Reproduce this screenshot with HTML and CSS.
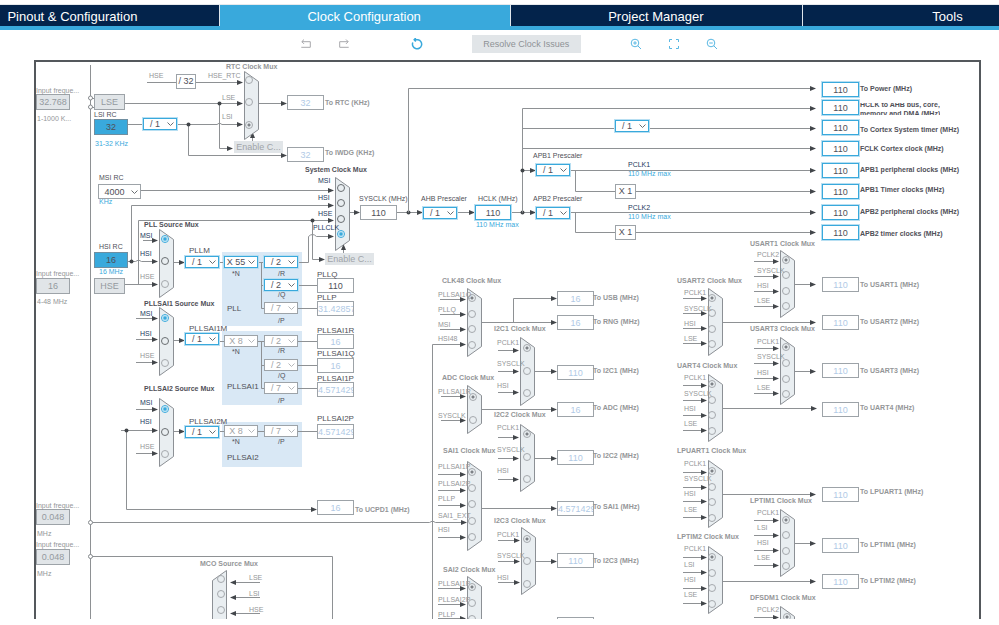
FILE: index.html
```html
<!DOCTYPE html>
<html lang="en">
<head>
<meta charset="utf-8">
<title>Clock Configuration</title>
<link rel="stylesheet" href="styles.css">
</head>
<body>
<nav class="tabs">
  <a class="tab" href="#pinout">Pinout &amp; Configuration</a>
  <a class="tab tab-active" href="#clock" aria-current="page">Clock Configuration</a>
  <a class="tab" href="#project">Project Manager</a>
  <a class="tab" href="#tools">Tools</a>
</nav>
<div class="toolbar">
  <div class="group">
    <button class="tool muted" aria-label="Undo"><svg viewBox="0 0 12 12"><path d="M4 1.5 1.8 3.7 4 5.9M2 3.7h8.3v5.6H1.3"/></svg></button>
    <button class="tool muted" aria-label="Redo"><svg viewBox="0 0 12 12"><path d="M8 1.5l2.200 2.200L8 5.900M10 3.700H1.700v5.600h9"/></svg></button>
  </div>
  <button class="tool strong" aria-label="Reset"><svg viewBox="0 0 12 12"><path d="M1.800 4.500A4.600 4.600 0 1 0 7 1.700H3.200M4.800 0 3.200 1.700 4.800 3.400"/></svg></button>
  <button class="resolve">Resolve Clock Issues</button>
  <div class="group">
    <button class="tool" aria-label="Zoom in"><svg viewBox="0 0 12 12"><circle cx="5" cy="5" r="3.800"/><path d="M7.800 7.800 11 11M3.200 5h3.600M5 3.200v3.600"/></svg></button>
    <button class="tool" aria-label="Fit to window"><svg viewBox="0 0 12 12"><path d="M1.500 4V1.500H4M8 1.500h2.500V4M10.500 8v2.500H8M4 10.500H1.500V8"/></svg></button>
    <button class="tool" aria-label="Zoom out"><svg viewBox="0 0 12 12"><circle cx="5" cy="5" r="3.800"/><path d="M7.800 7.800 11 11M3.200 5h3.600"/></svg></button>
  </div>
</div>
<main class="board" id="board">
  <svg class="wires"><g id="wires"></g></svg>
</main>
<script src="clock.js"></script>
</body>
</html>
```
FILE: styles.css
```css
* {
  box-sizing: border-box;
}

body {
  margin: 0;
  height: 100vh;
  display: flex;
  flex-direction: column;
  overflow: hidden;
  background: #fff;
  font-family: "Liberation Sans", Arial, sans-serif;
  color: #505058;
}

button,
input,
select {
  margin: 0;
  padding: 0;
  font: inherit;
  color: inherit;
  appearance: none;
  border-radius: 0;
}

.tabs {
  display: flex;
  margin-top: 4px;
  border-top: 1px solid #e6e9ec;
  border-bottom: 4px solid #39a9dc;
  overflow: hidden;
}

.tab {
  flex: 0 0 29.2%;
  height: 21px;
  line-height: 23px;
  padding-right: 2px;
  border-right: 1px solid #dfe6ec;
  background: #03234b;
  color: #fff;
  font-size: 13px;
  text-align: center;
  text-decoration: none;
}

.tab:first-child {
  margin-left: -7.2%;
}

.tab-active {
  background: #39a9dc;
}

.toolbar {
  display: flex;
  align-items: center;
  gap: 45px;
  height: 30px;
  padding-left: 29.6%;
  padding-bottom: 2px;
}

.group {
  display: flex;
  gap: 18px;
}

.group:first-child {
  margin-right: 8px;
}

.tool {
  width: 20px;
  height: 20px;
  border: 0;
  background: none;
  color: #5ab8e3;
  display: grid;
  place-items: center;
}

.tool svg {
  width: 12px;
  height: 12px;
  fill: none;
  stroke: currentColor;
  stroke-width: 1;
}

.tool.muted {
  color: #a8a8ac;
}

.tool.strong {
  color: #39a9dc;
}

.tool.strong svg {
  stroke-width: 1.5;
}

.resolve {
  width: 109px;
  height: 18px;
  border: 0;
  background: #e1e5e8;
  color: #8e9296;
  font-size: 9px;
}

.board {
  flex: 1;
  position: relative;
  margin: 0 18px 6px 34px;
  border: 2px solid #54585c;
  border-bottom: 0;
  overflow: hidden;
}

.wires {
  position: absolute;
  left: 0;
  top: 0;
  width: 100%;
  height: 100%;
}

.wire {
  fill: none;
  stroke: #8e9194;
  stroke-width: 1;
}

.head,
.dot {
  fill: #42464a;
}

.pad {
  fill: #fff;
  stroke: #85898d;
}

.mux {
  fill: #e9eef1;
  stroke: #8c9095;
}

.zone {
  fill: #d9e8f5;
}

/* Items placed on the diagram */
.item {
  position: absolute;
}

.text {
  font-size: 7px;
  line-height: 10px;
  white-space: nowrap;
}

.wide {
  font-size: 8px;
}

.wrap {
  height: 12px;
  display: flex;
  align-items: center;
  line-height: 9px;
  white-space: pre;
  overflow: hidden;
}

.bold {
  font-weight: bold;
}

.gray {
  color: #949698;
}

.navy {
  color: #243a5e;
}

.blue {
  color: #39a9dc;
}

.box {
  border: 1px solid #9da3a8;
  background: #fff;
  font-size: 9px;
  line-height: 12px;
  text-align: center;
}

.box.on {
  border-color: #39a9dc;
  box-shadow: 0 0 0 1px #b8dff2;
}

.box.off {
  color: #b1cae6;
}

.box.src {
  background: #39a9dc;
  border-color: #6f8ea0;
}

.box.pin {
  background: #e1e5e8;
  color: #949a9f;
}

.box.enable {
  background: #e1e5e8;
  border-color: #e1e5e8;
  color: #a0a4a8;
  line-height: 10px;
}

.pick select {
  display: block;
  width: 100%;
  height: 100%;
  border: 1px solid #39a9dc;
  box-shadow: 0 0 0 1px #b8dff2;
  background: #fff;
  font-size: 9px;
  line-height: 10px;
  padding-right: 10px;
  text-align: center;
  text-align-last: center;
}

.pick svg {
  position: absolute;
  right: 3px;
  top: 50%;
  width: 7px;
  height: 4px;
  margin-top: -2px;
  fill: none;
  stroke: #6a6e72;
}

.pick.idle select,
.pick.plain select {
  border-color: #9da3a8;
  box-shadow: none;
}

.pick.idle {
  color: #a0a3a6;
}

.pick.idle svg {
  stroke: #b4b7ba;
}

.radio {
  width: 8px;
  height: 8px;
  border: 1px solid #a5a9ad;
  border-radius: 50%;
}

.radio.live {
  border-color: #6a6e72;
}

.radio:checked {
  background: radial-gradient(circle, #7d8186 0 1px, transparent 2px);
}

.radio.live:checked {
  border-color: #39a9dc;
  background: radial-gradient(circle, #39a9dc 0 1px, #fff 3px);
}
```
FILE: clock.js
```js
// Board coordinates are measured from this origin.
const OX = 36, OY = 62;
const board = document.getElementById('board');
const wires = document.getElementById('wires');
wires.setAttribute('transform', `translate(${-OX} ${-OY})`);
let serial = 0;

function svg(name, cls, attrs) {
  const e = document.createElementNS('http://www.w3.org/2000/svg', name);
  e.setAttribute('class', cls);
  for (const k in attrs) e.setAttribute(k, attrs[k]);
  wires.append(e);
}

function item(tag, cls, x, y, w, h) {
  const e = document.createElement(tag);
  e.className = 'item ' + cls;
  e.style.left = x - OX + 'px';
  e.style.top = y - OY + 'px';
  if (w) e.style.width = w + 'px';
  if (h) e.style.height = h + 'px';
  board.append(e);
  return e;
}

// y is the vertical centre of the line of text
function text(str, x, y, cls = '', target) {
  const e = item(target ? 'label' : 'span', 'text ' + cls, x, Math.round(y - 5));
  e.textContent = str;
  if (target) e.htmlFor = target;
}

function box(str, x, y, w, h, cls) {
  const e = item('input', 'box ' + cls, x, y, w, h);
  e.type = 'text';
  e.readOnly = true;
  e.value = str;
  e.id = 'f' + ++serial;
  return e;
}

function field(str, x, y, w, h, cls, label, lx, ly, lcls) {
  text(label, lx, ly, lcls, box(str, x, y, w, h, cls).id);
}

function pick(str, x, y, name, cls = '', w = 34, h = 12) {
  const e = item('span', 'pick ' + cls, x, y, w, h);
  e.innerHTML = `<select aria-label="${name}"><option>${str}</option></select>` +
    '<svg viewBox="0 0 7 4"><path d="M.5.5 3.500 3.500 6.500.5"/></svg>';
}

function wire(d) {
  svg('path', 'wire', { d });
}

function head(x, y, dir = 'r') {
  const d = {
    r: `M${x} ${y}l-6-2.500v5z`,
    l: `M${x} ${y}l6-2.500v5z`,
    u: `M${x} ${y}l-2.500 6h5z`
  }[dir];
  svg('path', 'head', { d });
}

function arrow(d, x, y) {
  wire(`${d}H${x - 3}`);
  head(x, y);
}

function dot(x, y) {
  svg('circle', 'dot', { cx: x, cy: y, r: 2 });
}

// Blue PLL zones
[[252, 74], [331, 74], [422, 45]].forEach(([y, h]) =>
  svg('rect', 'zone', { x: 222, y, width: 80, height: h }));

// Supply line and pads
wire('M90.500 65V619M90.500 98.500H94M90.500 107.500H94');
wire('M92 522.500H429.500q3-3 6 0H464');
head(467, 522.5);
wire('M92 556.500H332.500V619');
[98, 107, 522.5, 556.5].forEach(y => svg('circle', 'pad', { cx: 90.5, cy: y, r: 2 }));

// RTC
wire('M147 82.500H176');
arrow('M196 82.500', 243, 82.5);
arrow('M125 103.500', 243, 103.5);
wire('M128 124.500H143');
wire('M177 124.500H217q2.500-3 5 0H240');
head(243, 124.5);
arrow('M219.500 103.500V148.500', 233, 148.5);
arrow('M188.500 124.500V155.500', 287, 155.5);
arrow('M258 103.500', 287, 103.5);
dot(219.5, 103.5);
dot(188.5, 124.5);
wire('M252.500 142V136');
head(252.5, 132, 'u');

// System clock
arrow('M141 190.500', 334, 190.5);
arrow('M131.500 261.500V205.500', 334, 205.5);
wire('M128 261.500H135.500q3-3 6 0H155');
head(158, 261.5);
dot(131.5, 261.5);
arrow('M125 284.500', 158, 284.5);
arrow('M138.500 284.500V220.500', 334, 220.5);
wire('M298 262.500H308.500V236.500q4-4 8 0H331');
head(334, 236.5);
arrow('M312.500 220.500V259.500', 325, 259.5);
dot(312.5, 220.5);
wire('M343.500 254V247');
head(343.5, 244, 'u');
arrow('M349 212.500', 360, 212.5);
arrow('M397 212.500', 423, 212.5);
arrow('M457 212.500', 475, 212.5);
arrow('M511 212.500', 536, 212.5);
dot(408.5, 212.5);
dot(522.5, 212.5);
arrow('M408.500 212.500V88.500', 816, 88.5);
arrow('M522.500 212.500V108.500', 816, 108.5);
[128.5, 148.5].forEach(y => arrow(`M522.500 ${y}`, 816, y));
arrow('M522.500 170.500', 536, 170.5);
dot(522.5, 170.5);
[[170.5, 191.5], [212.5, 232.5]].forEach(([a, b]) => {
  arrow(`M570 ${a}`, 816, a);
  arrow(`M575.500 ${a}V${b}`, 816, b);
});

// PLLs
wire('M219 262.500H264M261.500 262.500V308.500M261.500 285.500H317M261.500 308.500H317');
wire('M219 341.500H317M261.500 341.500V388.500M261.500 365.500H317M261.500 388.500H317M219 431.500H317');
arrow('M126.500 430.500V509.500', 317, 509.5);
wire('M121 430.500H137');
dot(126.5, 430.5);

arrow('M513.500 322.500V298.500', 557, 298.5);
wire('M432.500 619V344.500H440');

// Muxes: title, title colour, title x/y, body x/y/height, radio x, label x, input line x,
// inputs [name, radio y, line y, label y], output [y, tip x], selected input
const muxes = [
  ['RTC Clock Mux', 'gray', 226, 67, 244, 71, 68, 249, 222, 0, [['HSE_RTC', 80, 0, 76, 208], ['LSE', 102, 0, 98], ['LSI', 125, 0, 117]], 0, 2],
  ['System Clock Mux', '', 305, 170, 335, 177, 73, 341, 318, 0, [['MSI', 188, 0, 181], ['HSI', 203, 0, 198], ['HSE', 219, 0, 214], ['PLLCLK', 234, 0, 228, 313]], 0, 3],
  ['PLL Source Mux', '', 144, 225, 159, 229, 68, 165, 140, 143, [['MSI', 239, 240, 236], ['HSI', 261, 0, 254], ['HSE', 284, 0, 277]], [262, 185], 0],
  ['PLLSAI1 Source Mux', '', 144, 304, 159, 307, 68, 165, 140, 136, [['MSI', 318, 318, 314], ['HSI', 341, 339, 334], ['HSE', 363, 362, 356]], [340, 185], 0],
  ['PLLSAI2 Source Mux', '', 144, 389, 159, 398, 68, 165, 140, 136, [['MSI', 409, 409, 403], ['HSI', 432, 430, 422], ['HSE', 454, 453, 447]], [431, 185], 0],
  ['CLK48 Clock Mux', 'gray', 442, 281, 467, 288, 68, 472, 438, 440, [['PLLSAI1Q', 298, 299, 295], ['PLLQ', 314, 314, 310], ['MSI', 329, 329, 325], ['HSI48', 345, 344, 339]], [322, 557], 0],
  ['I2C1 Clock Mux', 'gray', 494, 329, 520, 337, 68, 527, 497, 498, [['PCLK1', 348, 350, 343], ['SYSCLK', 371, 371, 364], ['HSI', 393, 392, 386]], [371, 557], 0],
  ['ADC Clock Mux', 'gray', 442, 378, 467, 385, 48, 473, 438, 441, [['PLLSAI1R', 397, 396, 392], ['SYSCLK', 420, 420, 416]], [409, 557], 0],
  ['I2C2 Clock Mux', 'gray', 494, 415, 520, 424, 67, 527, 497, 498, [['PCLK1', 434, 437, 428], ['SYSCLK', 457, 458, 450], ['HSI', 479, 479, 471]], [458, 557], 0],
  ['SAI1 Clock Mux', 'gray', 443, 451, 467, 461, 89, 472, 438, 438, [['PLLSAI1P', 472, 474, 467], ['PLLSAI2P', 488, 490, 484], ['PLLP', 504, 505, 499], ['SAI1_EXT', 521, 0, 516], ['HSI', 537, 537, 530]], [508, 557], 0],
  ['I2C3 Clock Mux', 'gray', 494, 521, 521, 527, 67, 527, 497, 498, [['PCLK1', 539, 540, 535], ['SYSCLK', 561, 561, 556], ['HSI', 584, 582, 578]], [561, 557], 0],
  ['SAI2 Clock Mux', 'gray', 443, 570, 467, 576, 89, 472, 438, 438, [['PLLSAI1P', 587, 588, 584], ['PLLSAI2P', 603, 604, 600], ['PLLP', 619, 618, 615]], 0, 0],
  ['USART1 Clock Mux', 'gray', 750, 244, 780, 250, 67, 786, 757, 754, [['PCLK2', 260, 261, 255], ['SYSCLK', 275, 276, 271], ['HSI', 291, 291, 286], ['LSE', 306, 306, 301]], [284, 816], 0],
  ['USART2 Clock Mux', 'gray', 677, 281, 708, 288, 67, 712, 684, 683, [['PCLK1', 298, 298, 293], ['SYSCLK', 313, 313, 309], ['HSI', 329, 328, 324], ['LSE', 344, 343, 339]], [322, 816], 0],
  ['USART3 Clock Mux', 'gray', 750, 329, 780, 337, 67, 786, 757, 754, [['PCLK1', 347, 348, 342], ['SYSCLK', 363, 363, 357], ['HSI', 379, 378, 373], ['LSE', 394, 393, 388]], [371, 816], 0],
  ['UART4 Clock Mux', 'gray', 677, 366, 708, 374, 67, 712, 684, 683, [['PCLK1', 384, 385, 378], ['SYSCLK', 400, 400, 394], ['HSI', 415, 415, 409], ['LSE', 431, 430, 424]], [408, 817], 0],
  ['LPUART1 Clock Mux', 'gray', 677, 451, 708, 460, 67, 712, 684, 683, [['PCLK1', 471, 472, 464], ['SYSCLK', 487, 487, 479], ['HSI', 502, 501, 494], ['LSE', 518, 517, 510]], [494, 816], 0],
  ['LPTIM1 Clock Mux', 'gray', 750, 501, 780, 509, 67, 786, 757, 754, [['PCLK1', 520, 520, 513], ['LSI', 535, 535, 528], ['HSI', 551, 550, 543], ['LSE', 566, 565, 558]], [543, 816], 0],
  ['LPTIM2 Clock Mux', 'gray', 677, 537, 708, 546, 67, 712, 684, 683, [['PCLK1', 557, 557, 549], ['LSI', 573, 572, 565], ['HSI', 588, 588, 580], ['LSE', 604, 603, 595]], [581, 816], 0],
  ['DFSDM1 Clock Mux', 'gray', 750, 598, 780, 606, 67, 787, 757, 754, [['PCLK2', 617, 617, 610]], 0, 0]
];

muxes.forEach(([title, tone, tx, ty, x, y, h, rx, lx, ix, inputs, out, sel], n) => {
  svg('path', 'mux', { d: `M${x}.500 ${y}.500l14 10v${h - 20}l-14 10z` });
  if (out) arrow(`M${x + 15} ${out[0]}.500`, out[1], out[0] + 0.5);
  text(title, tx, ty, 'bold ' + tone);
  inputs.forEach(([name, ry, line, ly, ownX], i) => {
    if (line) arrow(`M${ix} ${line}.500`, x - 1, line + 0.5);
    const idle = tone === 'gray' || (name === 'HSE' && tx === 144);
    const r = item('input', 'radio' + (idle ? '' : ' live'), rx - 4, ry - 4);
    r.type = 'radio';
    r.name = 'mux' + n;
    r.id = `m${n}-${i}`;
    r.checked = i === sel;
    text(name, ownX || lx, ly, idle ? 'gray' : 'navy', r.id);
  });
});

// The MCO mux faces the other way
svg('path', 'mux', { d: 'M226.500 570.500l-14 10v48h14z' });
text('MCO Source Mux', 200, 564, 'bold gray');
[['LSE', 579, 582.5, 578], ['LSI', 594, 597.5, 594], ['HSE', 610, 613.5, 610]].forEach(([name, ry, line, ly], i) => {
  wire(`M260 ${line}H233`);
  head(230, line, 'l');
  const r = item('input', 'radio', 217, ry - 4);
  r.type = 'radio';
  r.name = 'mco';
  r.id = 'mco' + i;
  text(name, 249, ly, 'gray', r.id);
});

// Sources
field('32.768', 36, 94, 34, 16, 'pin', 'Input freque...', 36, 91, 'gray');
field('16', 36, 278, 34, 16, 'pin', 'Input freque...', 36, 274, 'gray');
field('0.048', 36, 509, 34, 16, 'pin', 'Input freque...', 36, 506, 'gray');
field('0.048', 36, 549, 34, 16, 'pin', 'Input freque...', 36, 545, 'gray');
text('1-1000 K...', 37, 119, 'gray');
text('4-48 MHz', 37, 302, 'gray');
text('MHz', 37, 534, 'gray');
text('MHz', 37, 574, 'gray');
[['LSE', 94], ['HSE', 278]].forEach(([s, y]) => {
  item('button', 'box pin', 94, y, 31, 16).textContent = s;
});
field('32', 94, 119, 34, 16, 'src', 'LSI RC', 94, 115);
field('16', 94, 252, 34, 16, 'src', 'HSI RC', 99, 247);
text('31-32 KHz', 95, 144, 'blue');
text('KHz', 99, 202, 'blue');
text('16 MHz', 99, 272, 'blue');
text('MSI RC', 99, 178);
pick('4000', 98, 184, 'MSI RC', 'plain', 43, 15);
pick('/ 1', 143, 118, 'LSI divider');
text('HSE', 149, 76, 'gray');
[['/ 32', 176, 74, 20], ['X 1', 615, 184, 21], ['X 1', 615, 225, 21]].forEach(([s, x, y, w]) => {
  item('span', 'box', x, y, w, 15).textContent = s;
});
[[234, 141], [325, 253]].forEach(([x, y]) => {
  item('button', 'box enable', x, y, 49, 12).textContent = 'Enable C...';
});

// PLL dividers
pick('/ 1', 185, 256, 'PLLM');
pick('/ 1', 185, 333, 'PLLSAI1M');
pick('/ 1', 185, 426, 'PLLSAI2M');
pick('X 55', 224, 256, 'PLL N');
pick('/ 2', 264, 256, 'PLL R');
pick('/ 2', 264, 279, 'PLL Q');
pick('/ 7', 264, 302, 'PLL P', 'idle');
pick('X 8', 224, 335, 'PLLSAI1 N', 'idle');
pick('/ 2', 264, 335, 'PLLSAI1 R', 'idle');
pick('/ 2', 264, 359, 'PLLSAI1 Q', 'idle');
pick('/ 7', 264, 382, 'PLLSAI1 P', 'idle');
pick('X 8', 224, 425, 'PLLSAI2 N', 'idle');
pick('/ 7', 264, 425, 'PLLSAI2 P', 'idle');
[['PLLM', 189, 251], ['PLLSAI1M', 189, 329], ['PLLSAI2M', 189, 422],
  ['*N', 232, 274], ['*N', 232, 352], ['*N', 232, 442],
  ['/R', 278, 274], ['/Q', 278, 295], ['/P', 278, 321],
  ['/R', 278, 351], ['/Q', 278, 376], ['/P', 278, 401], ['/P', 278, 442],
  ['PLL', 227, 309], ['PLLSAI1', 227, 387], ['PLLSAI2', 227, 458]
].forEach(([s, x, y]) => text(s, x, y, s.startsWith('PLL') ? 'wide' : ''));
[['110', 278, 'plain', 'PLLQ', 275], ['31.428571', 301, 'off', 'PLLP', 298],
  ['16', 334, 'off', 'PLLSAI1R', 331], ['16', 358, 'off', 'PLLSAI1Q', 354],
  ['4.571429', 382, 'off', 'PLLSAI1P', 379], ['4.571429', 424, 'off', 'PLLSAI2P', 419]
].forEach(([v, y, cls, label, ly]) => field(v, 317, y, 37, 15, cls, label, 317, ly, 'wide'));

// Bus prescalers
field('110', 360, 205, 37, 15, 'plain', 'SYSCLK (MHz)', 359, 199);
field('110', 475, 205, 36, 15, 'on', 'HCLK (MHz)', 478, 199);
text('110 MHz max', 476, 225, 'blue');
pick('/ 1', 423, 207, 'AHB Prescaler');
text('AHB Prescaler', 421, 199);
pick('/ 1', 536, 164, 'APB1 Prescaler');
text('APB1 Prescaler', 533, 156);
pick('/ 1', 536, 207, 'APB2 Prescaler');
text('APB2 Prescaler', 533, 199);
pick('/ 1', 615, 120, 'Cortex System timer prescaler');
text('PCLK1', 628, 165, 'navy');
text('110 MHz max', 628, 174, 'blue');
text('PCLK2', 628, 208, 'navy');
text('110 MHz max', 628, 217, 'blue');

// Outputs: value, x, y, state, caption, caption centre
[['110', 822, 82, 'on', 'To Power (MHz)', 89],
  ['110', 822, 120, 'on', 'To Cortex System timer (MHz)', 130],
  ['110', 822, 141, 'on', 'FCLK Cortex clock (MHz)', 149],
  ['110', 822, 163, 'on', 'APB1 peripheral clocks (MHz)', 170],
  ['110', 822, 184, 'on', 'APB1 Timer clocks (MHz)', 190],
  ['110', 822, 205, 'on', 'APB2 peripheral clocks (MHz)', 212],
  ['110', 822, 225, 'on', 'APB2 timer clocks (MHz)', 234],
  ['32', 287, 95, 'off', 'To RTC (KHz)', 103],
  ['32', 287, 147, 'off', 'To IWDG (KHz)', 153],
  ['16', 317, 500, 'off', 'To UCPD1 (MHz)', 510],
  ['16', 557, 291, 'off', 'To USB (MHz)', 298],
  ['16', 557, 315, 'off', 'To RNG (MHz)', 322],
  ['110', 557, 365, 'off', 'To I2C1 (MHz)', 371],
  ['16', 557, 402, 'off', 'To ADC (MHz)', 408],
  ['110', 557, 450, 'off', 'To I2C2 (MHz)', 456],
  ['4.571429', 557, 501, 'off', 'To SAI1 (MHz)', 507],
  ['110', 557, 553, 'off', 'To I2C3 (MHz)', 561],
  ['110', 822, 277, 'off', 'To USART1 (MHz)', 285],
  ['110', 822, 315, 'off', 'To USART2 (MHz)', 322],
  ['110', 822, 363, 'off', 'To USART3 (MHz)', 371],
  ['110', 822, 402, 'off', 'To UART4 (MHz)', 408],
  ['110', 822, 487, 'off', 'To LPUART1 (MHz)', 492],
  ['110', 822, 538, 'off', 'To LPTIM1 (MHz)', 545],
  ['110', 822, 574, 'off', 'To LPTIM2 (MHz)', 581]
].forEach(([v, x, y, cls, label, ly]) =>
  field(v, x, y, 37, 15, cls, label, x + (x === 557 ? 36 : 38), ly, cls === 'on' ? 'bold' : 'bold gray'));
box('', 557, 617, 37, 15, 'off').ariaLabel = 'SAI2';

const hclk = box('110', 822, 100, 37, 15, 'on');
const caption = item('label', 'text bold wrap', 860, 103);
caption.textContent = 'HCLK to AHB bus, core,\nmemory and DMA (MHz)';
caption.htmlFor = hclk.id;
```
